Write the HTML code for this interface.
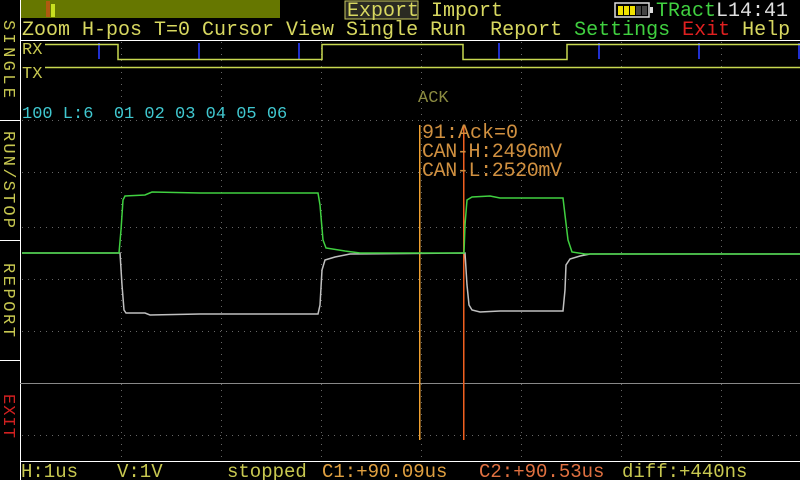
<!DOCTYPE html>
<html><head><meta charset="utf-8"><style>
html,body{margin:0;padding:0;background:#000;width:800px;height:480px;overflow:hidden}
svg{display:block}
text{font-family:"Liberation Mono",monospace;font-size:20px}
</style></head><body>
<svg width="800" height="480" viewBox="0 0 800 480" xmlns="http://www.w3.org/2000/svg">
<rect width="800" height="480" fill="#000"/>
<rect x="21" y="0" width="259" height="18" fill="#667700"/>
<rect x="46" y="1" width="4" height="16" fill="#b05a10"/>
<rect x="51" y="4" width="4" height="13" fill="#c8e020"/>
<rect x="345" y="1" width="73" height="18" fill="#2a2a22" stroke="#c8c860" stroke-width="1"/>
<text x="347" y="16" fill="#d8d860">Export</text>
<text x="431" y="16" fill="#d8d860">Import</text>
<rect x="615" y="3" width="34" height="14" fill="#000" stroke="#ddd" stroke-width="1.5"/>
<rect x="650" y="7" width="3" height="6" fill="#ddd"/>
<rect x="618" y="6" width="5" height="9" fill="#f0e000"/>
<rect x="624" y="6" width="5" height="9" fill="#f0e000"/>
<rect x="630" y="6" width="5" height="9" fill="#f0e000"/>
<rect x="636" y="6" width="5" height="9" fill="#444"/>
<rect x="642" y="6" width="5" height="9" fill="#444"/>
<text x="656" y="16" fill="#40d040">TRact</text>
<text x="716" y="16" fill="#e0e0e0">L14:41</text>
<text x="22" y="35" xml:space="preserve"><tspan fill="#d8d860">Zoom H-pos T=0 Cursor View Single Run  Report </tspan><tspan fill="#40d040">Settings </tspan><tspan fill="#e02020">Exit </tspan><tspan fill="#d8d860">Help</tspan></text>
<line x1="20.5" y1="0" x2="20.5" y2="480" stroke="#fff"/>
<line x1="20" y1="40.5" x2="800" y2="40.5" stroke="#fff"/>
<line x1="20" y1="461.5" x2="800" y2="461.5" stroke="#fff"/>
<line x1="0" y1="120.5" x2="20" y2="120.5" stroke="#fff"/>
<line x1="0" y1="240.5" x2="20" y2="240.5" stroke="#fff"/>
<line x1="0" y1="360.5" x2="20" y2="360.5" stroke="#fff"/>
<text transform="translate(4,20) rotate(90)" fill="#c8c850" style="font-size:17px" textLength="78">SINGLE</text>
<text transform="translate(4,131) rotate(90)" fill="#c8c850" style="font-size:17px" textLength="97">RUN/STOP</text>
<text transform="translate(4,263) rotate(90)" fill="#c8c850" style="font-size:17px" textLength="74">REPORT</text>
<text transform="translate(4,394) rotate(90)" fill="#d02020" style="font-size:17px" textLength="44">EXIT</text>
<g stroke="#666" stroke-width="1" stroke-dasharray="1,5">
<line x1="121.5" y1="42" x2="121.5" y2="460"/>
<line x1="221.5" y1="42" x2="221.5" y2="460"/>
<line x1="321.5" y1="42" x2="321.5" y2="460"/>
<line x1="421.5" y1="42" x2="421.5" y2="460"/>
<line x1="521.5" y1="42" x2="521.5" y2="460"/>
<line x1="621.5" y1="42" x2="621.5" y2="460"/>
<line x1="721.5" y1="42" x2="721.5" y2="460"/>
<line x1="22" y1="120.5" x2="800" y2="120.5"/>
<line x1="22" y1="172.5" x2="800" y2="172.5"/>
<line x1="22" y1="227.5" x2="800" y2="227.5"/>
<line x1="22" y1="279.5" x2="800" y2="279.5"/>
<line x1="22" y1="331.5" x2="800" y2="331.5"/>
<line x1="22" y1="435.5" x2="800" y2="435.5"/>
</g>
<line x1="20" y1="383.5" x2="800" y2="383.5" stroke="#888"/>
<text x="22" y="54" fill="#c8c850" style="font-size:17px">RX</text>
<text x="22" y="78" fill="#c8c850" style="font-size:17px">TX</text>
<g stroke="#2030d0" stroke-width="2">
<line x1="99" y1="43" x2="99" y2="59"/><line x1="199" y1="43" x2="199" y2="59"/>
<line x1="299" y1="43" x2="299" y2="59"/><line x1="499" y1="43" x2="499" y2="59"/>
<line x1="599" y1="43" x2="599" y2="59"/><line x1="699" y1="43" x2="699" y2="59"/>
<line x1="799" y1="43" x2="799" y2="59"/>
</g>
<polyline fill="none" stroke="#c8d850" stroke-width="1.5" points="45,44.5 118,44.5 118,59.5 322,59.5 322,44.5 463,44.5 463,59.5 567,59.5 567,44.5 800,44.5"/>
<line x1="45" y1="67.5" x2="800" y2="67.5" stroke="#c8d850" stroke-width="1.5"/>
<text x="418" y="102" fill="#8a8a40" style="font-size:17px">ACK</text>
<text x="22" y="118" fill="#40c8d0" xml:space="preserve" style="font-size:17px">100 L:6  01 02 03 04 05 06</text>
<rect x="419" y="125" width="1.5" height="315" fill="#f0a030"/>
<rect x="463" y="125" width="1.5" height="315" fill="#f06020"/>
<g fill="#d09040">
<text x="422" y="138" textLength="96">91:Ack=0</text>
<text x="422" y="157" textLength="140">CAN-H:2496mV</text>
<text x="422" y="176" textLength="140">CAN-L:2520mV</text>
</g>
<polyline fill="none" stroke="#c0c0c0" stroke-width="1.5" points="22,253 120,253 122,285 124,310 126,313 145,313 150,315 200,314 318,314 320,305 322,270 325,260 335,257 350,254 465,253 467,285 469,305 472,310 480,312 500,311 563,311 565,290 566,265 570,259 580,256 590,254 800,254"/>
<polyline fill="none" stroke="#40d040" stroke-width="1.5" points="22,253 119,253 121,230 123,200 125,196 145,195 152,192 200,193 318,193 320,205 323,240 326,248 345,251 360,253 400,253 464,253 465,225 467,200 472,197 490,196 500,198 563,198 565,215 568,240 572,252 585,254 800,254"/>
<text x="21" y="477" fill="#c8c850" style="font-size:19px">H:1us</text>
<text x="117" y="477" fill="#c8c850" style="font-size:19px">V:1V</text>
<text x="227" y="477" fill="#c8c850" style="font-size:19px">stopped</text>
<text x="322" y="477" fill="#e0a040" style="font-size:19px">C1:+90.09us</text>
<text x="479" y="477" fill="#e07040" style="font-size:19px">C2:+90.53us</text>
<text x="622" y="477" fill="#c8c850" style="font-size:19px">diff:+440ns</text>
</svg>
</body></html>
